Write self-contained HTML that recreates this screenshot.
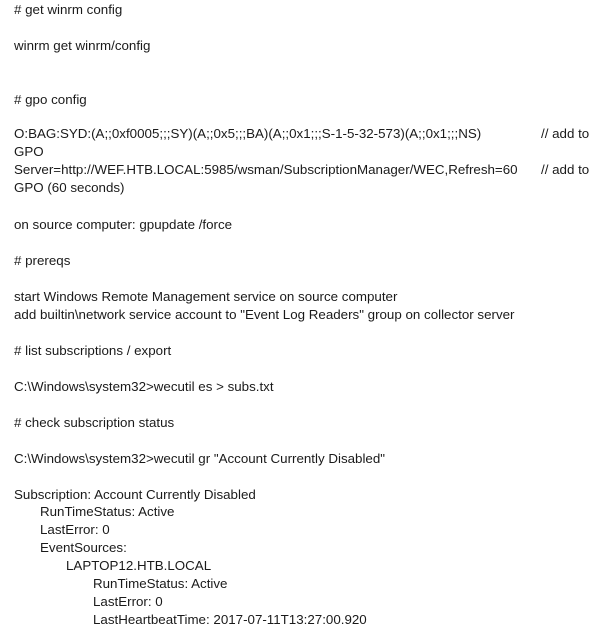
<!DOCTYPE html>
<html><head><style>
body{margin:0;width:613px;height:635px;background:#fff;position:relative;overflow:hidden;font-family:"Liberation Sans",sans-serif;font-size:13.35px;color:#1a1a1a}
div{position:absolute;white-space:nowrap;line-height:18px;left:14px;margin-top:1px}
.a{left:541px}
.i1{left:40px}.i2{left:66px}.i3{left:93px}
</style></head><body>
<div style="top:0">#&nbsp;get winrm config</div>
<div style="top:36px">winrm get winrm/config</div>
<div style="top:90px">#&nbsp;gpo config</div>
<div style="top:124px">O:BAG:SYD:(A;;0xf0005;;;SY)(A;;0x5;;;BA)(A;;0x1;;;S-1-5-32-573)(A;;0x1;;;NS)</div>
<div class="a" style="top:124px">// add to</div>
<div style="top:142px">GPO</div>
<div style="top:160px">Server=http://WEF.HTB.LOCAL:5985/wsman/SubscriptionManager/WEC,Refresh=60</div>
<div class="a" style="top:160px">// add to</div>
<div style="top:178px">GPO (60 seconds)</div>
<div style="top:215px">on source computer: gpupdate /force</div>
<div style="top:251px">#&nbsp;prereqs</div>
<div style="top:287px">start Windows Remote Management service on source computer</div>
<div style="top:305px">add builtin\network service account to "Event Log Readers" group on collector server</div>
<div style="top:341px">#&nbsp;list subscriptions / export</div>
<div style="top:377px">C:\Windows\system32&gt;wecutil es &gt; subs.txt</div>
<div style="top:413px">#&nbsp;check subscription status</div>
<div style="top:449px">C:\Windows\system32&gt;wecutil gr "Account Currently Disabled"</div>
<div style="top:485px">Subscription: Account Currently Disabled</div>
<div class="i1" style="top:502px">RunTimeStatus: Active</div>
<div class="i1" style="top:520px">LastError: 0</div>
<div class="i1" style="top:538px">EventSources:</div>
<div class="i2" style="top:556px">LAPTOP12.HTB.LOCAL</div>
<div class="i3" style="top:574px">RunTimeStatus: Active</div>
<div class="i3" style="top:592px">LastError: 0</div>
<div class="i3" style="top:610px">LastHeartbeatTime: 2017-07-11T13:27:00.920</div>
</body></html>
